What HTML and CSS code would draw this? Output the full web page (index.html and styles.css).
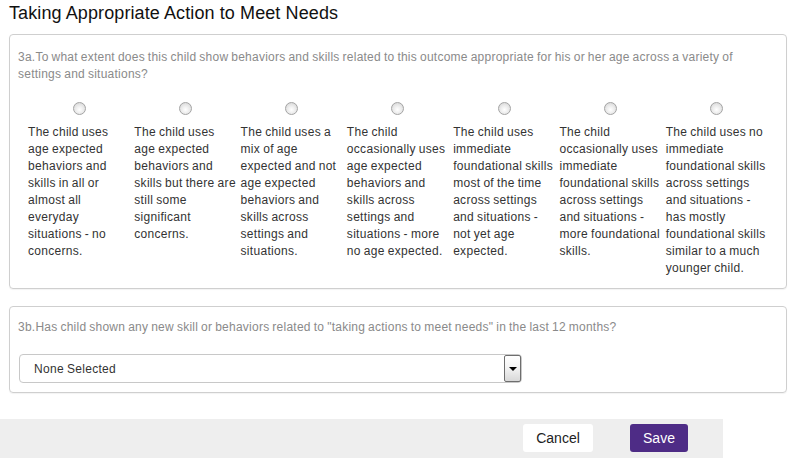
FILE: index.html
```html
<!DOCTYPE html>
<html>
<head>
<meta charset="utf-8">
<link rel="stylesheet" href="styles.css">
</head>
<body>
<div class="page">
  <h1 class="title">Taking Appropriate Action to Meet Needs</h1>
  <div class="box box-a">
    <div class="question">3a.To what extent does this child show behaviors and skills related to this outcome appropriate for his or her age across a variety of<br>settings and situations?</div>
    <div class="options">
      <label class="option"><input class="radio" type="radio" name="q3a"><span class="opt-text">The child uses<br>age expected<br>behaviors and<br>skills in all or<br>almost all<br>everyday<br>situations - no<br>concerns.</span></label>
      <label class="option"><input class="radio" type="radio" name="q3a"><span class="opt-text">The child uses<br>age expected<br>behaviors and<br>skills but there are<br>still some<br>significant<br>concerns.</span></label>
      <label class="option"><input class="radio" type="radio" name="q3a"><span class="opt-text">The child uses a<br>mix of age<br>expected and not<br>age expected<br>behaviors and<br>skills across<br>settings and<br>situations.</span></label>
      <label class="option"><input class="radio" type="radio" name="q3a"><span class="opt-text">The child<br>occasionally uses<br>age expected<br>behaviors and<br>skills across<br>settings and<br>situations - more<br>no age expected.</span></label>
      <label class="option"><input class="radio" type="radio" name="q3a"><span class="opt-text">The child uses<br>immediate<br>foundational skills<br>most of the time<br>across settings<br>and situations -<br>not yet age<br>expected.</span></label>
      <label class="option"><input class="radio" type="radio" name="q3a"><span class="opt-text">The child<br>occasionally uses<br>immediate<br>foundational skills<br>across settings<br>and situations -<br>more foundational<br>skills.</span></label>
      <label class="option"><input class="radio" type="radio" name="q3a"><span class="opt-text">The child uses no<br>immediate<br>foundational skills<br>across settings<br>and situations -<br>has mostly<br>foundational skills<br>similar to a much<br>younger child.</span></label>
    </div>
  </div>
  <div class="box box-b">
    <div class="question">3b.Has child shown any new skill or behaviors related to "taking actions to meet needs" in the last 12 months?</div>
    <div class="select">
      <span class="select-text">None Selected</span>
      <span class="select-btn"><span class="tri"></span></span>
    </div>
  </div>
</div>
<div class="footer">
  <button class="btn btn-cancel">Cancel</button>
  <button class="btn btn-save">Save</button>
</div>
</body>
</html>
```
FILE: styles.css
```css
html, body {
  margin: 0;
  padding: 0;
  background: #fff;
  font-family: "Liberation Sans", Arial, sans-serif;
}
.page {
  padding: 3px 5px 0 9px;
}
.title {
  margin: 0;
  font-size: 18px;
  line-height: 21px;
  font-weight: normal;
  color: #111;
  letter-spacing: 0.1px;
}
.box {
  border: 1px solid #cfcfcf;
  border-radius: 4px;
  box-shadow: 0 1px 1px rgba(0,0,0,0.05);
}
.box-a {
  margin-top: 10px;
  padding: 14px 14px 11px 8px;
}
.question {
  font-size: 12px;
  line-height: 17px;
  color: #8a8a8a;
  letter-spacing: 0.24px;
  word-spacing: -0.6px;
  white-space: nowrap;
}
.options {
  display: grid;
  grid-template-columns: repeat(7, 1fr);
  margin-top: 19px;
  padding-left: 10px;
}
.option {
  display: flex;
  flex-direction: column;
  padding-right: 4px;
  min-width: 0;
}
.radio {
  appearance: none;
  -webkit-appearance: none;
  margin: 0 auto;
  width: 13px;
  height: 13px;
  border-radius: 50%;
  border: 1px solid #a4a4a4;
  background: radial-gradient(circle at 50% 60%, #ffffff 0%, #ececec 45%, #d0d0d0 100%);
  box-sizing: border-box;
}
.opt-text {
  margin-top: 9px;
  font-size: 12px;
  line-height: 17px;
  color: #333;
  letter-spacing: 0.3px;
  word-spacing: -0.6px;
  white-space: nowrap;
}
.box-b {
  margin-top: 17px;
  padding: 12px 14px 9px 8px;
}
.select {
  margin-top: 18px;
  margin-left: 1px;
  width: 503px;
  height: 29px;
  box-sizing: border-box;
  border: 1px solid #c8c8c8;
  border-radius: 4px;
  display: flex;
  align-items: center;
  justify-content: space-between;
  padding: 0 0 0 14px;
}
.select-text {
  font-size: 12px;
  color: #333;
  letter-spacing: 0.3px;
  word-spacing: -0.6px;
}
.select-btn {
  width: 17px;
  height: 27px;
  box-sizing: border-box;
  border: 1px solid #6e6e6e;
  border-radius: 2px;
  background: linear-gradient(#ffffff, #f4f4f4 45%, #d8d8d8);
  display: flex;
  align-items: center;
  justify-content: center;
}
.tri {
  width: 0;
  height: 0;
  border-left: 4px solid transparent;
  border-right: 4px solid transparent;
  border-top: 4px solid #000;
}
.footer {
  margin-top: 26px;
  width: 723px;
  height: 39px;
  background: #eeeeee;
  display: flex;
  justify-content: flex-end;
  align-items: flex-start;
  padding: 5px 35px 0 0;
  box-sizing: border-box;
  gap: 37px;
}
.btn {
  height: 28px;
  border: none;
  border-radius: 3px;
  font-family: "Liberation Sans", Arial, sans-serif;
  font-size: 14px;
  padding: 0 13px;
}
.btn-cancel {
  background: #fff;
  color: #222;
  width: 70px;
}
.btn-save {
  background: #4e2c86;
  color: #fff;
  width: 58px;
}
```
